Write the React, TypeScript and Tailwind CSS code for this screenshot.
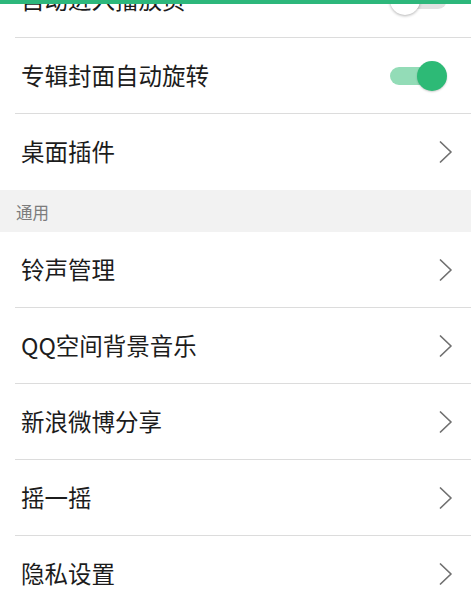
import type { ReactNode } from "react";

const FONT = { fontFamily: '"Noto Sans CJK SC", "Noto Sans", sans-serif' };

function Chevron() {
  return (
    <svg width="14" height="22" viewBox="0 0 14 22" fill="none">
      <path d="M1.5 1 L12 11 L1.5 21" stroke="#707070" strokeWidth="1.7" strokeLinecap="round" strokeLinejoin="round" />
    </svg>
  );
}

function Toggle({ on }: { on: boolean }) {
  if (on) {
    return (
      <div className="relative mr-[6px] h-[30px] w-[57px]">
        <div className="absolute left-0 top-[6px] h-[18px] w-[50px] rounded-full bg-[#93dcb7]" />
        <div className="absolute right-0 top-0 h-[30px] w-[30px] rounded-full bg-[#2dba76] shadow-[0_1px_2px_rgba(0,0,0,0.2)]" />
      </div>
    );
  }
  return (
    <div className="relative mr-[6px] h-[30px] w-[57px]">
      <div className="absolute left-[7px] top-[6px] h-[18px] w-[50px] rounded-full bg-[#e2e2e2]" />
      <div className="absolute left-0 top-0 h-[30px] w-[30px] rounded-full bg-white shadow-[0_1px_3px_rgba(0,0,0,0.3)]" />
    </div>
  );
}

function Row({ label, right, divider = true }: { label: string; right: ReactNode; divider?: boolean }) {
  return (
    <div className="pl-[15px]">
      <div
        className={
          divider
            ? "flex h-[76px] items-center justify-between border-b border-[#dcdcdc] pl-[6px] pr-[18px]"
            : "flex h-[76px] items-center justify-between pl-[6px] pr-[18px]"
        }
      >
        <span className="text-[23.5px] leading-none text-[#1c1c1c]">{label}</span>
        {right}
      </div>
    </div>
  );
}

export default function App() {
  return (
    <div className="relative h-[596px] w-[471px] overflow-hidden bg-white" style={FONT}>
      <div className="absolute left-0 top-0 z-10 h-[4px] w-full bg-[#2db77b]" />
      <div className="mt-[-38px]">
        <Row label="自动进入播放页" right={<Toggle on={false} />} />
        <Row label="专辑封面自动旋转" right={<Toggle on />} />
        <Row label="桌面插件" right={<Chevron />} divider={false} />
        <div className="flex h-[42px] items-center bg-[#f2f2f2] pl-[16px] pt-[2px] text-[16.5px] text-[#7c7c7c]">通用</div>
        <Row label="铃声管理" right={<Chevron />} />
        <Row label="QQ空间背景音乐" right={<Chevron />} />
        <Row label="新浪微博分享" right={<Chevron />} />
        <Row label="摇一摇" right={<Chevron />} />
        <Row label="隐私设置" right={<Chevron />} />
      </div>
    </div>
  );
}
